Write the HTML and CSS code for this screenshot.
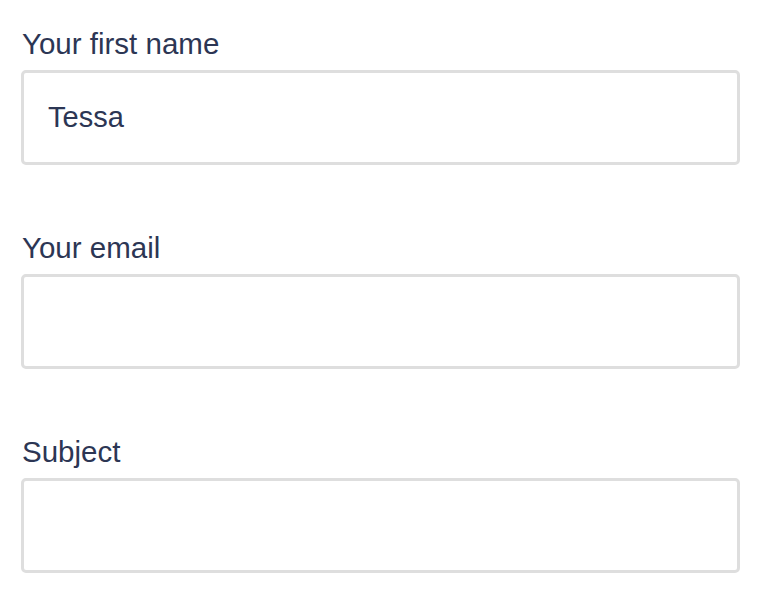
FILE: index.html
```html
<!DOCTYPE html>
<html lang="en">
<head>
  <meta charset="UTF-8" />
  <meta name="viewport" content="width=device-width, initial-scale=1.0"/>
  <title>Contact</title>
  <link rel="stylesheet" href="styles.css">
</head>
<body>

  <form class="contact-form">
    <div class="field">
      <label for="firstName">Your first name</label>
      <input type="text" id="firstName" value="Tessa">
    </div>

    <div class="field">
      <label for="email">Your email</label>
      <input type="email" id="email">
    </div>

    <div class="field">
      <label for="subject">Subject</label>
      <input type="text" id="subject">
    </div>
  </form>

</body>
</html>
```

FILE: styles.css
```css
body {
  margin: 0;
  background: #fff;
  font-family: "Liberation Sans", Arial, sans-serif;
  color: #2c3654;
}

.contact-form {
  padding: 27px 28px 0 21px;
}

.field {
  margin-bottom: 66px;
}

.field:last-child {
  margin-bottom: 0;
}

.field label {
  display: block;
  font-size: 29.5px;
  line-height: 33px;
  margin-bottom: 10px;
  padding-left: 1px;
}

.field input {
  display: block;
  box-sizing: border-box;
  width: 100%;
  height: 95px;
  padding: 0 24px;
  border: 3px solid #dedede;
  border-radius: 5px;
  font-family: inherit;
  font-size: 29px;
  color: #2c3654;
  background: #fff;
  outline: none;
}
```
